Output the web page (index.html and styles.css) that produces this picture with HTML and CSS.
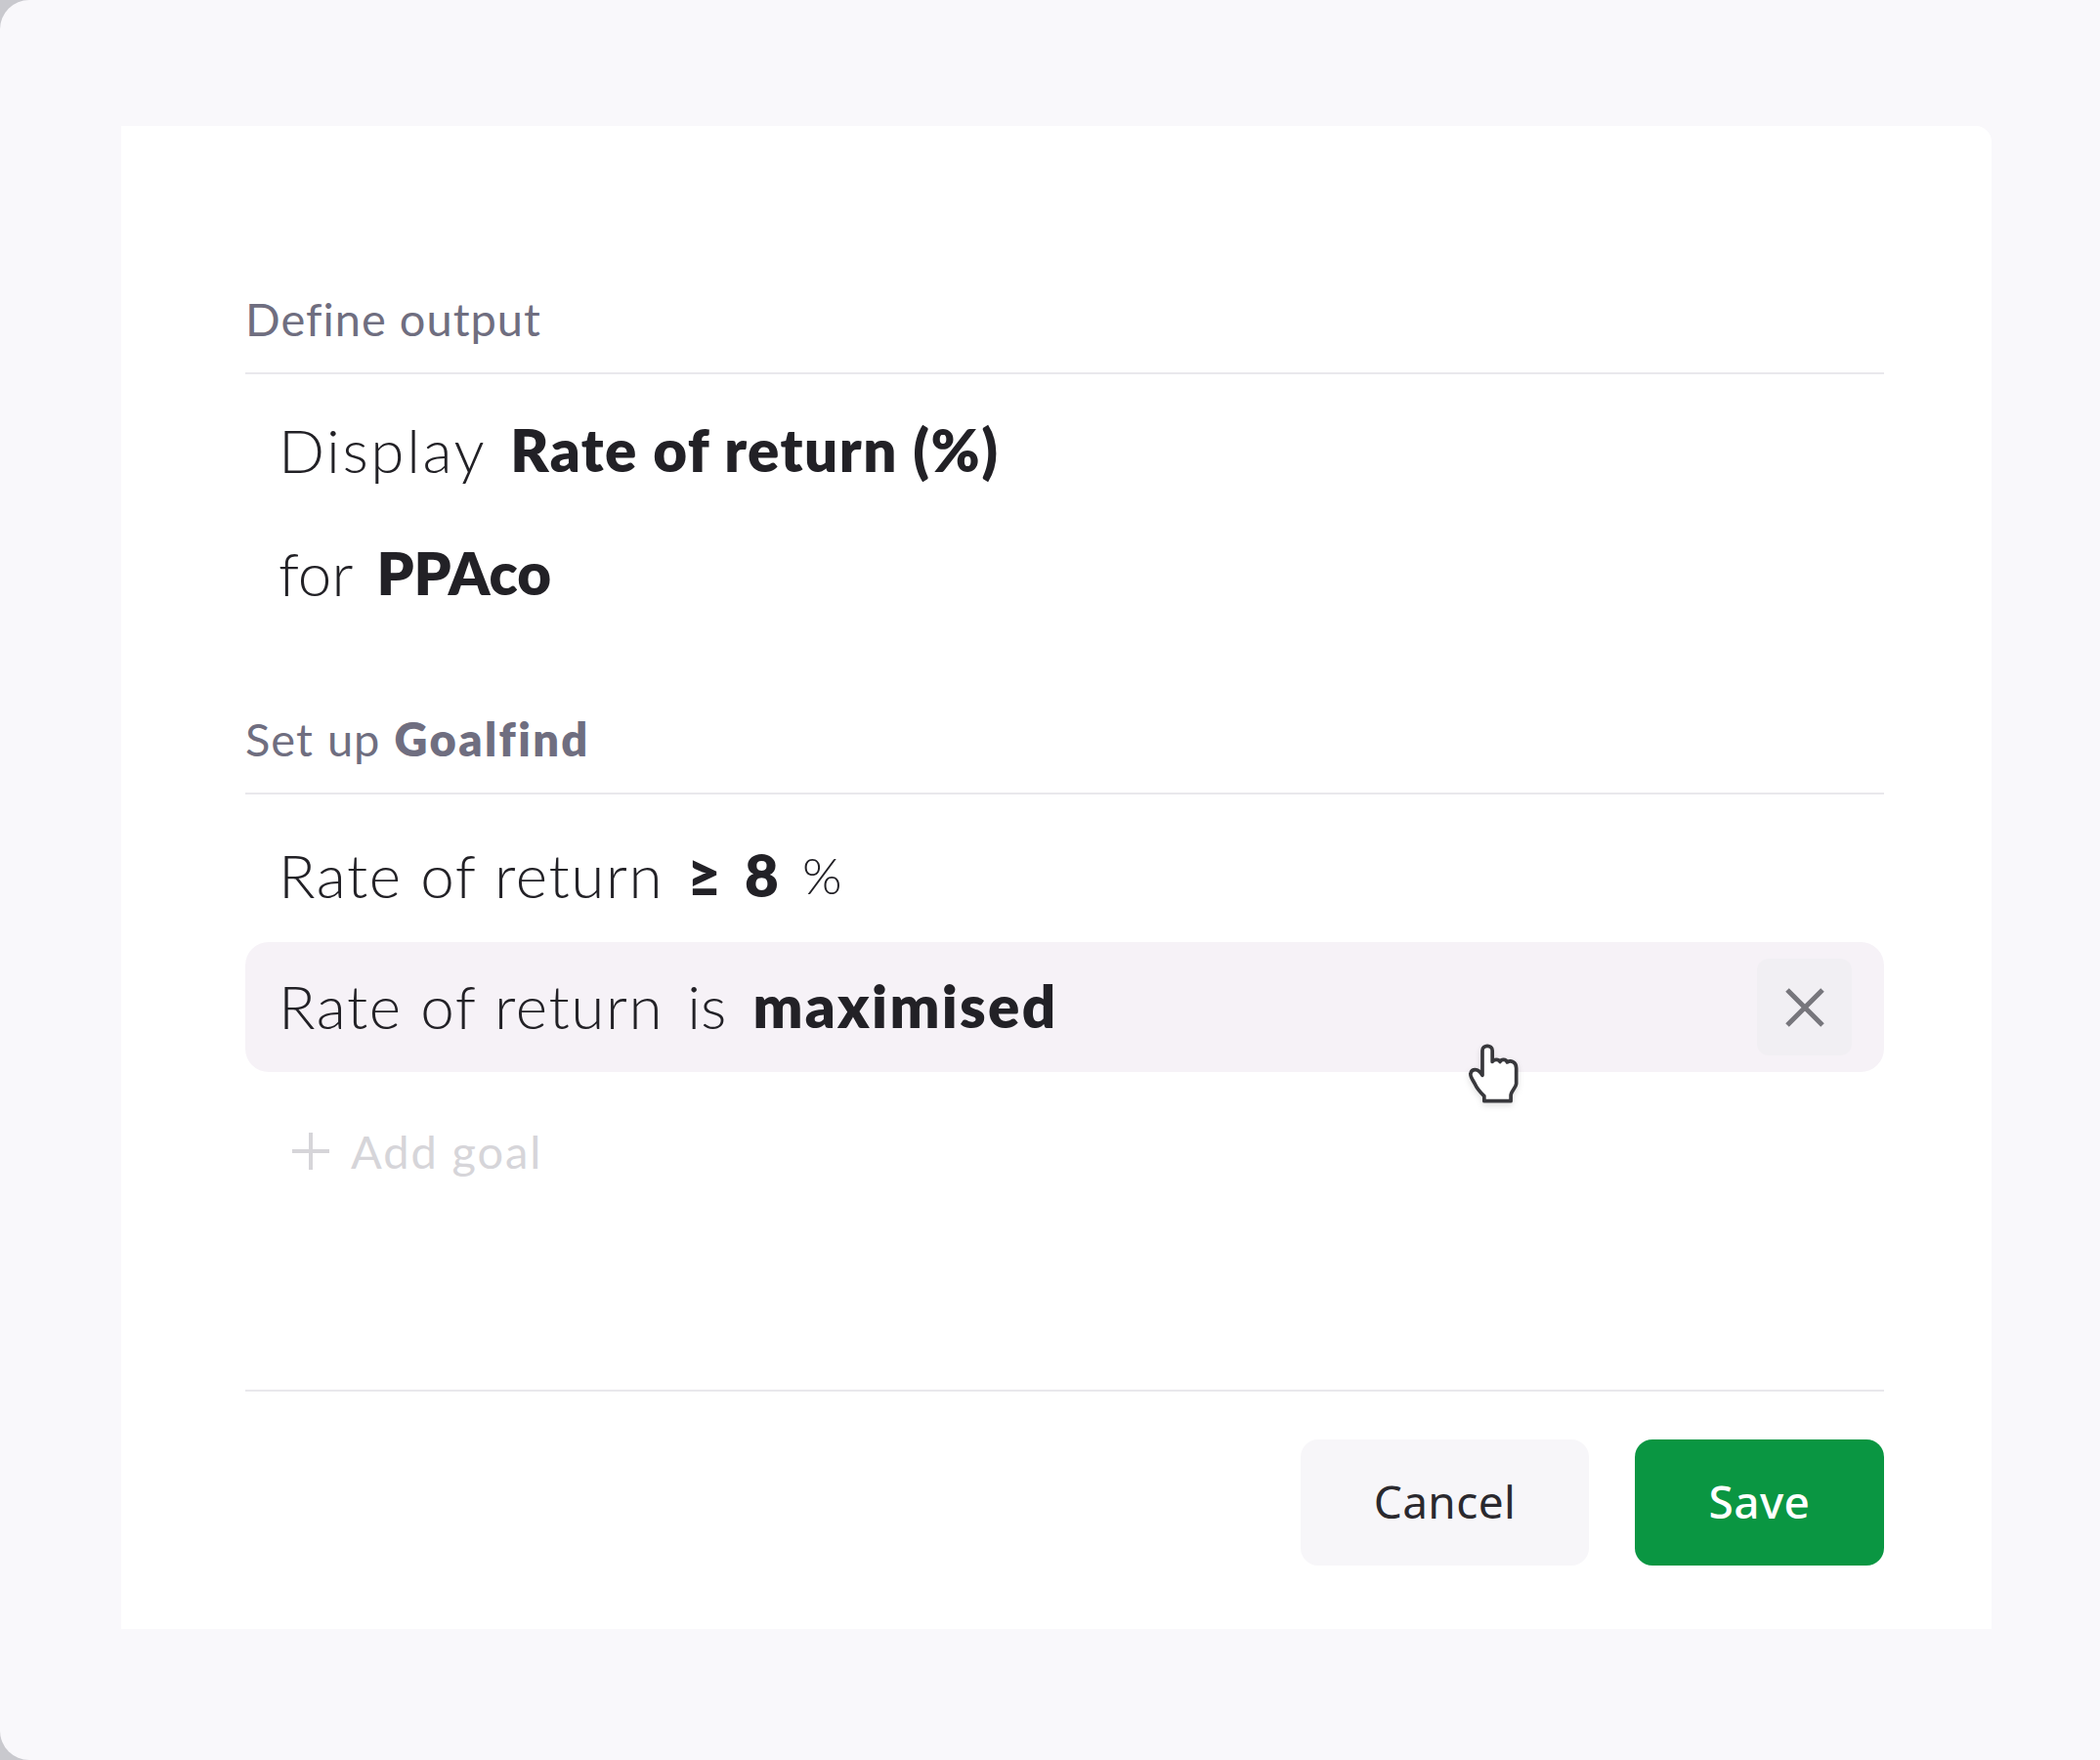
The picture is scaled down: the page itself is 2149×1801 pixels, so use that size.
FILE: index.html
```html
<!DOCTYPE html>
<html lang="en">
<head>
<meta charset="utf-8">
<title>Goalfind</title>
<link rel="stylesheet" href="styles.css">
</head>
<body>
<div class="frame">
  <main class="card">
    <section class="section">
      <h2 class="label">Define output</h2>
      <div class="row row-tall first"><span class="tr-display">Display</span><b class="strong tr-metric">Rate of return (%)</b></div>
      <div class="row row-tall"><span>for</span><b class="strong">PPAco</b></div>
    </section>
    <section class="section goal-section">
      <h2 class="label">Set up <b>Goalfind</b></h2>
      <div class="row goal-row"><span class="tr-light">Rate of return</span><b class="strong">≥</b><b class="strong">8</b><span class="pct">%</span></div>
      <div class="row goal-row active">
        <span class="tr-light">Rate of return</span><span>is</span><b class="strong tr-max">maximised</b>
        <button class="close" aria-label="Remove">
          <svg class="close-icon" viewBox="0 0 40 40" aria-hidden="true"><path d="M2 2 38 38M38 2 2 38"/></svg>
        </button>
        <svg class="cursor" viewBox="0 0 56 66" aria-hidden="true"><path d="M15 35V7.500C15 1 26 1 26 7.500V20C28 17 33 17 34.500 20C36 17 41 17 42.500 20.500C46 18 52.500 20 52.500 27V44C52.500 48 46.500 53 46.500 57V63.500H17V58C13 54 9 50 7 45C5 41 1 36 2 33C3 28 10 26 15 35Z"/></svg>
      </div>
      <div class="add-goal">
        <svg class="plus" viewBox="0 0 38 38" aria-hidden="true"><path d="M19 0V38M0 19H38"/></svg>
        <span>Add goal</span>
      </div>
    </section>
    <footer class="footer">
      <button class="btn btn-cancel">Cancel</button>
      <button class="btn btn-save">Save</button>
    </footer>
  </main>
</div>
</body>
</html>
```
FILE: styles.css
```css
* { box-sizing: border-box; }
html, body { margin: 0; padding: 0; }
body {
  width: 2149px;
  height: 1801px;
  overflow: hidden;
  background: #c9c9ce;
  font-family: "Lato", "Liberation Sans", sans-serif;
}
.frame {
  height: 1801px;
  padding: 129px 111px 134px 124px;
  background: #f9f8fb;
  border-radius: 30px 0 0 30px;
}
.card {
  height: 100%;
  padding: 169px 110px 65px 127px;
  background: #ffffff;
  border-radius: 0 16px 0 0;
  display: flex;
  flex-direction: column;
}
.label {
  margin: 0;
  height: 85px;
  padding-bottom: 23px;
  font-size: 47px;
  line-height: 57px;
  letter-spacing: 1px;
  font-weight: 400;
  color: #6f6e80;
  border-bottom: 2px solid #e9e8ec;
}
.label b { font-weight: 800; letter-spacing: 2.4px; }
.row {
  display: flex;
  align-items: center;
  gap: 24px;
  padding: 0 0 5px 34px;
  font-size: 62px;
  font-weight: 300;
  color: #222126;
}
.row-tall { height: 126px; }
.first { margin-top: 16px; }
.strong { font-weight: 800; font-size: 60px; }
.tr-light { letter-spacing: 1.6px; }
.tr-display { letter-spacing: 2.6px; }
.tr-metric { letter-spacing: 1.5px; }
.tr-max { letter-spacing: 2.3px; margin-left: 3px; }
.pct { font-size: 52px; }
.goal-section { margin-top: 75px; }
.goal-row { height: 133px; }
.goal-section .label {
  height: 87px;
  padding-bottom: 25px;
  margin-bottom: 18px;
  line-height: 60px;
  word-spacing: 1px;
}
.active {
  position: relative;
  background: #f6f2f7;
  border-radius: 24px;
  padding-bottom: 0;
}
.active > span, .active > b { position: relative; top: -2px; }
.close {
  margin-left: auto;
  margin-right: 33px;
  width: 97px;
  height: 99px;
  padding: 0;
  border: 0;
  border-radius: 12px;
  background: #f1eff3;
  display: flex;
  align-items: center;
  justify-content: center;
}
.close-icon {
  width: 40px;
  height: 40px;
  fill: none;
  stroke: #77767c;
  stroke-width: 5;
}
.cursor {
  position: absolute;
  left: 1252px;
  top: 104px;
  width: 52px;
  height: 61px;
  fill: #fff;
  stroke: #38383c;
  stroke-width: 4;
  stroke-linejoin: round;
  filter: drop-shadow(0 3px 3px rgba(0,0,0,.12));
}
.add-goal {
  margin-top: 51px;
  padding-left: 48px;
  display: flex;
  align-items: center;
  gap: 22px;
  height: 60px;
  font-size: 47px;
  letter-spacing: 1.9px;
  color: #d6d5d9;
}
.plus {
  width: 38px;
  height: 38px;
  fill: none;
  stroke: #d6d5d9;
  stroke-width: 4;
}
.footer {
  margin-top: auto;
  padding-top: 49px;
  border-top: 2px solid #e9e8ec;
  display: flex;
  justify-content: flex-end;
  gap: 47px;
}
.btn {
  height: 129px;
  border: 0;
  border-radius: 18px;
  font-family: "Noto Sans", "Liberation Sans", sans-serif;
  font-size: 46px;
  padding: 0 0 4px;
  letter-spacing: .4px;
}
.btn-cancel { width: 295px; background: #f7f6f9; color: #2a292e; }
.btn-save { width: 255px; background: #0a9642; color: #ffffff; font-weight: 500; }
```
